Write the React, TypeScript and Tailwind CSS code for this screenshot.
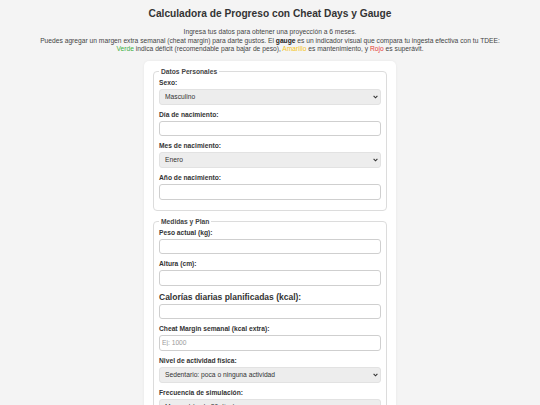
import { ReactNode } from 'react';

const font = { fontFamily: '"Liberation Sans", Arial, sans-serif' };

type FieldProps = {
  label: string;
  big?: boolean;
  children: ReactNode;
};

const Field = ({ label, big, children }: FieldProps) => (
  <div className="mb-[6px]">
    <label
      className={
        big
          ? 'block text-[8.5px] leading-[10px] font-bold text-[#333] mb-[2px]'
          : 'block text-[6.7px] leading-[8px] font-bold text-[#333] mb-[2px]'
      }
    >
      {label}
    </label>
    {children}
  </div>
);

const TextInput = ({ placeholder }: { placeholder?: string }) => (
  <input
    type="text"
    placeholder={placeholder}
    className="block w-full h-[15.5px] border border-[#cfcfcf] rounded-[3px] bg-white pl-[2px] text-[6.7px] text-[#333] placeholder:text-[#9a9a9a] outline-none"
  />
);

const Select = ({ value }: { value: string }) => (
  <div className="relative">
    <select className="block w-full h-[16px] appearance-none border border-[#e2e2e2] rounded-[3px] bg-[#ededed] pl-[5px] text-[6.7px] leading-[14px] text-[#333] outline-none">
      <option>{value}</option>
    </select>
    <svg
      className="absolute right-[3px] top-[6px] pointer-events-none"
      width="5"
      height="4"
      viewBox="0 0 5 4"
    >
      <path d="M0.6 0.8 L2.5 2.8 L4.4 0.8" stroke="#333" strokeWidth="1.1" fill="none" />
    </svg>
  </div>
);

type GroupProps = {
  legend: string;
  children: ReactNode;
};

const Group = ({ legend, children }: GroupProps) => (
  <fieldset className="border border-[#dcdcdc] rounded-[4px] px-[5px] pt-[3px] pb-[4px] mb-[7px]">
    <legend className="px-[2px] text-[6.7px] leading-[8px] font-bold text-[#444]">{legend}</legend>
    {children}
  </fieldset>
);

const App = () => {
  return (
    <div className="min-h-screen bg-[#f4f4f4] pt-[8px]" style={font}>
      <h1 className="text-center text-[10.2px] leading-[12px] font-bold text-[#333]">
        Calculadora de Progreso con Cheat Days y Gauge
      </h1>
      <p className="mt-[8px] text-center text-[6.7px] leading-[8.5px] text-[#444]">
        Ingresa tus datos para obtener una proyección a 6 meses.
        <br />
        Puedes agregar un margen extra semanal (cheat margin) para darte gustos. El{' '}
        <strong className="font-bold text-[#222]">gauge</strong> es un indicador visual que compara tu
        ingesta efectiva con tu TDEE:
        <br />
        <span className="text-[#3cb043]">Verde</span> indica déficit (recomendable para bajar de peso),{' '}
        <span className="text-[#f5c518]">Amarillo</span> es mantenimiento, y{' '}
        <span className="text-[#e53935]">Rojo</span> es superávit.
      </p>

      <div className="mx-auto mt-[7px] w-[252px] bg-white rounded-[5px] shadow-[0_0_3px_rgba(0,0,0,0.06)] px-[9px] pt-[7px] pb-[8px]">
        <Group legend="Datos Personales">
          <Field label="Sexo:">
            <Select value="Masculino" />
          </Field>
          <Field label="Día de nacimiento:">
            <TextInput />
          </Field>
          <Field label="Mes de nacimiento:">
            <Select value="Enero" />
          </Field>
          <Field label="Año de nacimiento:">
            <TextInput />
          </Field>
        </Group>

        <Group legend="Medidas y Plan">
          <Field label="Peso actual (kg):">
            <TextInput />
          </Field>
          <Field label="Altura (cm):">
            <TextInput />
          </Field>
          <Field label="Calorías diarias planificadas (kcal):" big>
            <TextInput />
          </Field>
          <Field label="Cheat Margin semanal (kcal extra):">
            <TextInput placeholder="Ej: 1000" />
          </Field>
          <Field label="Nivel de actividad física:">
            <Select value="Sedentario: poca o ninguna actividad" />
          </Field>
          <Field label="Frecuencia de simulación:">
            <Select value="Mensual (cada 30 días)" />
          </Field>
        </Group>
      </div>
    </div>
  );
};

export default App;
